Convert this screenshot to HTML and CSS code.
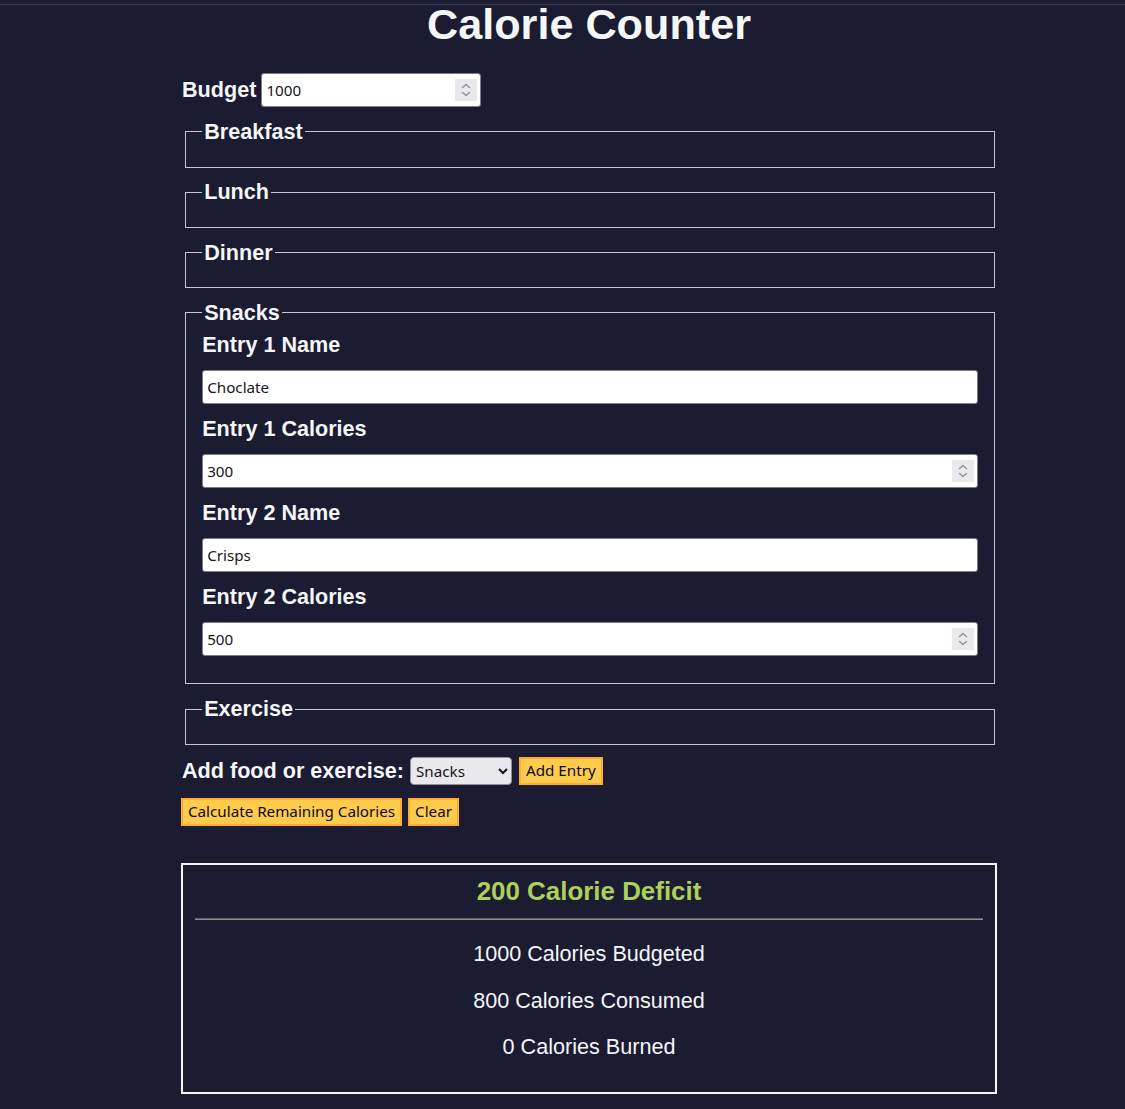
FILE: index.html
```html
<!DOCTYPE html>
<html lang="en">
<head>
<meta charset="utf-8">
<title>Calorie Counter</title>
<link rel="stylesheet" href="styles.css">
</head>
<body>
<main class="app">
  <h1 class="title">Calorie Counter</h1>
  <form class="form">
    <div class="controls">
      <label class="ctl-label" for="budget">Budget</label>
      <div class="num-field budget-field">
        <input class="field" id="budget" type="number" value="1000">
        <span class="spin"><svg width="22" height="22" viewBox="0 0 22 22"><path d="M7.5 8.5 L11 5.5 L14.5 8.5 M7.5 13.5 L11 16.5 L14.5 13.5" fill="none" stroke="#8f8f9d" stroke-width="1.4" stroke-linecap="round" stroke-linejoin="round"/></svg></span>
      </div>
    </div>
    <fieldset class="group"><legend class="group-title">Breakfast</legend><div class="entries"></div></fieldset>
    <fieldset class="group"><legend class="group-title">Lunch</legend><div class="entries"></div></fieldset>
    <fieldset class="group"><legend class="group-title">Dinner</legend><div class="entries"></div></fieldset>
    <fieldset class="group"><legend class="group-title">Snacks</legend>
      <div class="entries">
        <label class="entry-label" for="s1n">Entry 1 Name</label>
        <div class="text-field"><input class="field" id="s1n" type="text" value="Choclate"></div>
        <label class="entry-label" for="s1c">Entry 1 Calories</label>
        <div class="num-field"><input class="field" id="s1c" type="number" value="300"><span class="spin"><svg width="22" height="22" viewBox="0 0 22 22"><path d="M7.5 8.5 L11 5.5 L14.5 8.5 M7.5 13.5 L11 16.5 L14.5 13.5" fill="none" stroke="#8f8f9d" stroke-width="1.4" stroke-linecap="round" stroke-linejoin="round"/></svg></span></div>
        <label class="entry-label" for="s2n">Entry 2 Name</label>
        <div class="text-field"><input class="field" id="s2n" type="text" value="Crisps"></div>
        <label class="entry-label" for="s2c">Entry 2 Calories</label>
        <div class="num-field"><input class="field" id="s2c" type="number" value="500"><span class="spin"><svg width="22" height="22" viewBox="0 0 22 22"><path d="M7.5 8.5 L11 5.5 L14.5 8.5 M7.5 13.5 L11 16.5 L14.5 13.5" fill="none" stroke="#8f8f9d" stroke-width="1.4" stroke-linecap="round" stroke-linejoin="round"/></svg></span></div>
      </div>
    </fieldset>
    <fieldset class="group"><legend class="group-title">Exercise</legend><div class="entries"></div></fieldset>
    <div class="controls add-row">
      <label class="ctl-label" for="entry-dropdown">Add food or exercise:</label>
      <select class="dropdown" id="entry-dropdown">
        <option>Breakfast</option>
        <option>Lunch</option>
        <option>Dinner</option>
        <option selected>Snacks</option>
        <option>Exercise</option>
      </select>
      <button class="btn" type="button">Add Entry</button>
    </div>
    <div class="actions">
      <button class="btn btn-calc" type="button">Calculate Remaining Calories</button>
      <button class="btn" type="button">Clear</button>
    </div>
  </form>
  <div class="output">
    <h2 class="result deficit">200 Calorie Deficit</h2>
    <hr class="divider">
    <p class="stat">1000 Calories Budgeted</p>
    <p class="stat">800 Calories Consumed</p>
    <p class="stat">0 Calories Burned</p>
  </div>
</main>
</body>
</html>
```

FILE: styles.css
```css
* {
  box-sizing: border-box;
}

html, body {
  margin: 0;
  padding: 0;
}

body {
  background-color: #1b1b32;
  color: #f5f6f7;
  font-family: "Liberation Sans", Arial, sans-serif;
  font-size: 21.6px;
  min-height: 1109px;
  position: relative;
}

body::before {
  content: "";
  position: absolute;
  left: 0;
  right: 0;
  top: 4px;
  height: 1px;
  background: #3a3a4f;
}

.app {
  width: 816px;
  margin: 0 0 0 181px;
}

.title {
  margin: 0;
  font-size: 43.2px;
  line-height: 48.5px;
  text-align: center;
}

.form {
  display: flex;
  flex-direction: column;
  gap: 11.65px;
  margin-top: 24.85px;
}

.controls {
  display: flex;
  align-items: center;
  padding-left: 1px;
}

.ctl-label {
  font-weight: bold;
  margin-right: 5px;
}

.budget-field {
  width: 220px;
}

.num-field,
.text-field {
  position: relative;
}

.field {
  display: block;
  width: 100%;
  height: 34px;
  margin: 0;
  padding: 0 4px;
  border: 1px solid #7d7d8a;
  border-radius: 3px;
  background: #ffffff;
  color: #15141a;
  font-family: "Noto Sans", "DejaVu Sans", sans-serif;
  font-size: 15.2px;
  outline: none;
}

.field::-webkit-inner-spin-button,
.field::-webkit-outer-spin-button {
  -webkit-appearance: none;
  margin: 0;
}

.field[type="number"] {
  -moz-appearance: textfield;
}

.spin {
  position: absolute;
  right: 4px;
  top: 50%;
  transform: translateY(-50%);
  width: 22px;
  height: 22px;
  background: #e9e9ed;
  display: block;
}

.spin svg {
  display: block;
}

.group {
  margin: 0 2px 0 4px;
  padding: 0.35em 0.75em 14.1px;
  border: 1px solid #c8c8cc;
  min-width: 0;
}

.group-title {
  font-weight: bold;
  padding: 0 2px;
  line-height: 26px;
}

.entries {
  display: flex;
  flex-direction: column;
}

.entry-label {
  font-weight: bold;
  line-height: 25px;
  margin-bottom: 12.5px;
}

.entry-label:first-child {
  margin-top: -1px;
}

.entries .text-field,
.entries .num-field {
  margin-bottom: 12.5px;
}

.entries > :last-child {
  margin-bottom: 13.5px;
}

.add-row {
  margin-top: 0.5px;
}

.add-row .ctl-label {
  margin-right: 6px;
}

.dropdown {
  width: 102px;
  height: 28px;
  margin: 0 7px 0 0;
  padding: 0 2px 0 1px;
  border: 1px solid #8f8f9d;
  border-radius: 4px;
  background-color: #e9e9ed;
  color: #15141a;
  font-family: "Noto Sans", "DejaVu Sans", sans-serif;
  font-size: 15.2px;
}

.actions {
  display: flex;
  gap: 6px;
  margin-top: 1.5px;
}

.btn {
  height: 28px;
  margin: 0;
  padding: 0 5px;
  border: 2px solid #feac32;
  background-color: #fecc4c;
  color: #0a0a23;
  font-family: "Noto Sans", "DejaVu Sans", sans-serif;
  font-size: 15.2px;
  line-height: 1;
  cursor: pointer;
}

.output {
  margin-top: 37px;
  border: 2px solid #f5f6f7;
  padding: 12px 12px 11px;
  text-align: center;
}

.result {
  margin: 0;
  font-size: 25.92px;
  font-weight: bold;
  line-height: 29.8px;
}

.deficit {
  color: #acd157;
}

.divider {
  margin: 10.8px 0;
  height: 0;
  border: none;
  border-top: 1px solid #5f5f68;
  border-bottom: 1px solid #8a8a90;
}

.stat {
  margin: 21.6px 0;
  line-height: 25px;
}
```
